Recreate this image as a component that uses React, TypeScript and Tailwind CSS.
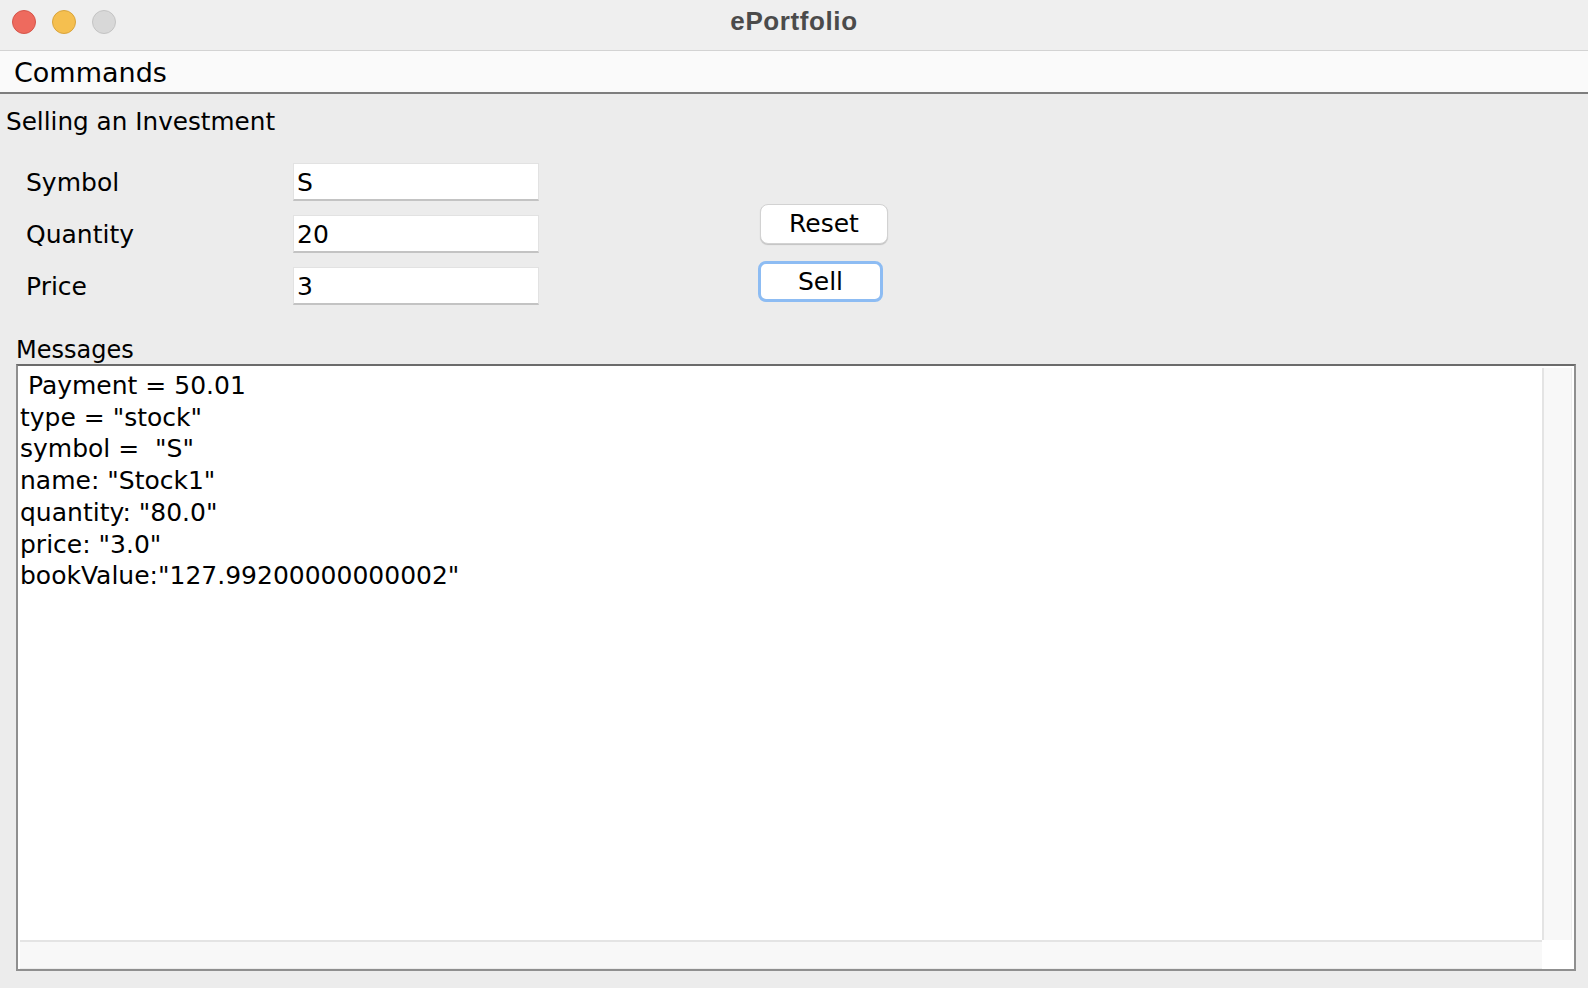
import React from "react";

const ui = { fontFamily: '"DejaVu Sans", "Liberation Sans", sans-serif' };

function Field({ value }: { value: string }) {
  return (
    <div className="h-[38px] w-[246px] bg-white border border-[#e2e2e2] border-b-2 border-b-[#c3c3c3] flex items-center pl-[3px] pt-[2px] text-[25px] text-black leading-none">
      {value}
    </div>
  );
}

export default function App() {
  const lines = [
    " Payment = 50.01",
    'type = "stock"',
    'symbol =  "S"',
    'name: "Stock1"',
    'quantity: "80.0"',
    'price: "3.0"',
    'bookValue:"127.99200000000002"',
  ];
  return (
    <div className="w-[1588px] h-[988px] bg-[#ececec] flex flex-col overflow-hidden" style={ui}>
      {/* Title bar */}
      <div className="h-[51px] shrink-0 bg-[#efefef] border-b border-[#d3d3d3] grid grid-cols-[1fr_auto_1fr] items-start">
        <div className="flex gap-[16px] pl-[12px] pt-[10px]">
          <div className="w-[24px] h-[24px] rounded-full bg-[#ee6a5e] border border-[#d5554a]" />
          <div className="w-[24px] h-[24px] rounded-full bg-[#f5bf4f] border border-[#d9a43c]" />
          <div className="w-[24px] h-[24px] rounded-full bg-[#d8d8d8] border border-[#c4c4c4]" />
        </div>
        <div
          className="pt-[6px] text-[26px] font-bold text-[#4b4b4b] leading-[30px]"
          style={{ fontFamily: '"Liberation Sans", Arial, sans-serif', letterSpacing: "0.6px" }}
        >
          ePortfolio
        </div>
        <div />
      </div>

      {/* Menu bar */}
      <div className="h-[43px] shrink-0 bg-[#fafafa] border-b-2 border-[#7e7e7e] flex items-center pl-[14px] pt-[2px]">
        <span className="text-[27px] text-black leading-none">Commands</span>
      </div>

      {/* Content */}
      <div className="flex-1 flex flex-col">
        <div className="mt-[13px] ml-[6px] text-[24.7px] leading-[30px] text-black">Selling an Investment</div>

        <div className="flex mt-[26px]">
          <div className="ml-[26px] grid grid-cols-[267px_246px] gap-y-[14px]">
            <div className="h-[38px] flex items-center pt-[2px] text-[25px] text-black">Symbol</div>
            <Field value="S" />
            <div className="h-[38px] flex items-center pt-[2px] text-[25px] text-black">Quantity</div>
            <Field value="20" />
            <div className="h-[38px] flex items-center pt-[2px] text-[25px] text-black">Price</div>
            <Field value="3" />
          </div>
          <div className="ml-[221px] mt-[41px] flex flex-col gap-[17px]">
            <button className="w-[128px] h-[40px] bg-white rounded-[8px] border border-[#d2d2d2] shadow-[0_1px_1px_rgba(0,0,0,0.18)] text-[25px] text-black leading-none flex items-center justify-center pb-[2px]">
              Reset
            </button>
            <button className="-ml-[2px] w-[125px] h-[41px] bg-white rounded-[8px] border-[3px] border-[#8dbcf3] text-[25px] text-black leading-none flex items-center justify-center pb-[1px]">
              Sell
            </button>
          </div>
        </div>

        <div className="mt-[31px] ml-[16px] text-[24px] leading-[28px] text-black">Messages</div>

        <div className="ml-[16px] mr-[12px] h-[607px] border-2 border-[#8f8f8f] border-t-[#6b6b6b] bg-white grid grid-cols-[1fr_32px] grid-rows-[1fr_29px]">
          <div className="pl-[2px] pt-[4px] text-[25px] leading-[31.7px] text-black whitespace-pre">
            {lines.map((l, i) => (
              <div key={i}>{l}</div>
            ))}
          </div>
          <div className="pt-[2px] pr-[2px] flex">
            <div className="w-[30px] bg-[#f8f8f8] border-l-2 border-[#e4e4e4] border-r border-r-[#ededed]" />
          </div>
          <div className="pl-[2px]">
            <div className="h-full bg-[#f8f8f8] border-t-2 border-[#e4e4e4] border-b border-b-[#ececec]" />
          </div>
          <div className="bg-white" />
        </div>
      </div>
    </div>
  );
}
